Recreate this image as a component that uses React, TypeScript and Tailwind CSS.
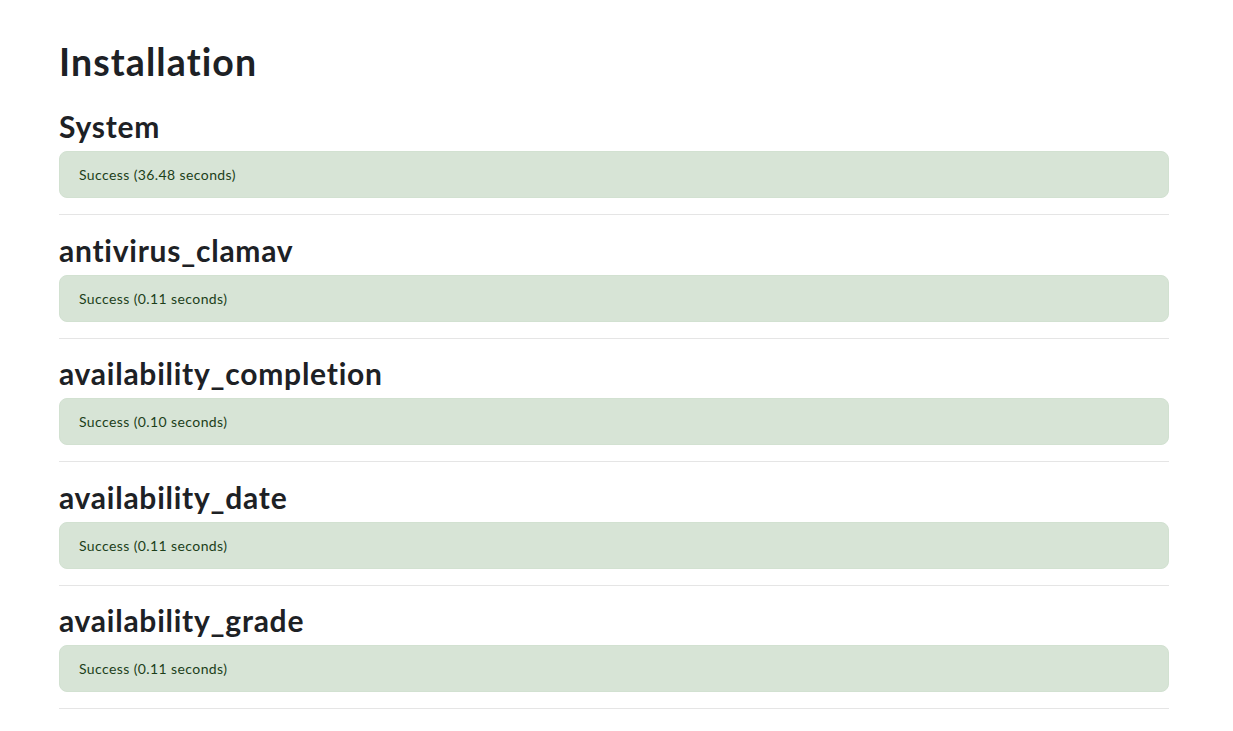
import React from "react";

const items = [
  { name: "System", time: "36.48" },
  { name: "antivirus_clamav", time: "0.11" },
  { name: "availability_completion", time: "0.10" },
  { name: "availability_date", time: "0.11" },
  { name: "availability_grade", time: "0.11" },
];

export default function App() {
  return (
    <div
      className="min-h-[731px] bg-white text-[#1d2125]"
      style={{ fontFamily: "Lato, 'Noto Sans', sans-serif" }}
    >
      <div className="w-[1110px] ml-[59px] pt-[39px]">
        <h2 className="text-[37.5px] font-bold leading-[1.2] mb-[24px] tracking-[1.1px]">Installation</h2>
        {items.map((it, i) => (
          <div key={it.name}>
            {i > 0 && <div className="h-px bg-[#e5e5e5] mt-[16px] mb-[16.5px]" />}
            <h2 className="text-[30px] font-bold leading-[1.2] mb-[7px] tracking-[0.75px]">{it.name}</h2>
            <div className="rounded-[8px] border border-[#d2e1d1] bg-[#d7e4d6] px-[19px] py-[11px] text-[14px] leading-[23px] text-[#1c3f1a] tracking-[0.4px]">
              Success ({it.time} seconds)
            </div>
          </div>
        ))}
        <div className="h-px bg-[#e5e5e5] mt-[16px]" />
      </div>
    </div>
  );
}
